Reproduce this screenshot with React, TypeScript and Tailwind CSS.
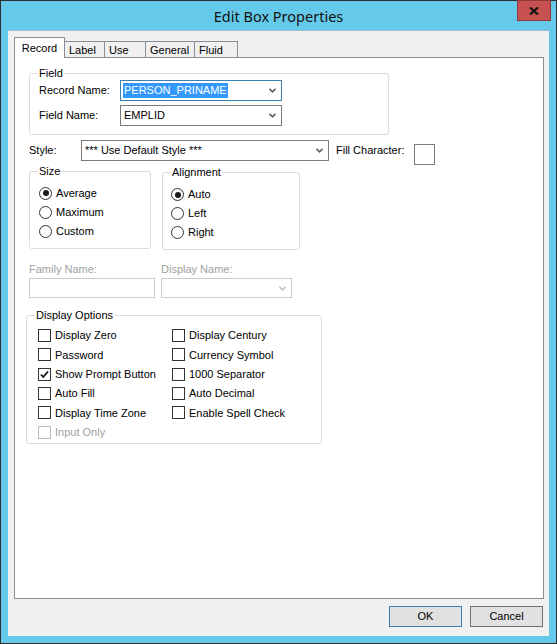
import React from 'react';

const font = { fontFamily: '"Liberation Sans", Arial, sans-serif' };

function Chevron({ disabled }: { disabled?: boolean }) {
  return (
    <svg width="7" height="5" viewBox="0 0 7 5" className="shrink-0">
      <path d="M0.5 0.8 L3.5 3.8 L6.5 0.8" fill="none" stroke={disabled ? '#c4c4c4' : '#606060'} strokeWidth="1.6" />
    </svg>
  );
}

function Select({ value, width, focused, disabled }: { value?: string; width: string; focused?: boolean; disabled?: boolean }) {
  const border = focused ? 'border-[#3c7fb1]' : disabled ? 'border-[#cccccc]' : 'border-[#7a7a7a]';
  return (
    <div className={`${width} h-[21px] border ${border} bg-white flex items-center pl-[2px] pr-[5px]`}>
      <div className="flex-1 min-w-0 flex">
        {value &&
          (focused ? (
            <span className="bg-[#3399ff] text-white px-px leading-[15px]">{value}</span>
          ) : (
            <span className="px-px leading-[15px]">{value}</span>
          ))}
      </div>
      <Chevron disabled={disabled} />
    </div>
  );
}

function Group({ title, className, children }: { title: string; className: string; children: React.ReactNode }) {
  return (
    <div className={`relative border border-[#dcdcdc] rounded-[3px] ${className}`}>
      <span className="absolute -top-[8px] left-[8px] bg-white px-px leading-[14px]">{title}</span>
      {children}
    </div>
  );
}

function Radio({ label, checked }: { label: string; checked?: boolean }) {
  return (
    <div className="flex items-center gap-[4px]">
      <span className="w-[13px] h-[13px] rounded-full border border-[#333333] bg-white flex items-center justify-center">
        {checked && <span className="w-[6px] h-[6px] rounded-full bg-[#1a1a1a]" />}
      </span>
      <span>{label}</span>
    </div>
  );
}

function Check({ label, checked, disabled }: { label: string; checked?: boolean; disabled?: boolean }) {
  return (
    <div className={`h-[19.3px] flex items-center gap-[4px] ${disabled ? 'text-[#a0a0a0]' : ''}`}>
      <span className={`w-[13px] h-[13px] border ${disabled ? 'border-[#bcbcbc]' : 'border-[#333333]'} bg-white flex items-center justify-center`}>
        {checked && (
          <svg width="9" height="9" viewBox="0 0 9 9">
            <path d="M1 4.5 L3.3 7 L8 1.5" fill="none" stroke="#111" strokeWidth="1.8" />
          </svg>
        )}
      </span>
      <span>{label}</span>
    </div>
  );
}

export default function App() {
  const tabs = ['Label', 'Use', 'General', 'Fluid'];
  const tabWidths = ['w-[40px]', 'w-[41px]', 'w-[49px]', 'w-[43px]'];

  return (
    <div className="w-[557px] h-[644px] border border-[#2f2f2f] bg-[#65caea] flex flex-col text-[11px] text-black" style={font}>
      {/* Title bar */}
      <div className="relative h-[29px] flex items-center justify-center">
        <span className="text-[14.5px] text-[#111] mt-[2px]" style={{ fontFamily: '"Noto Sans", sans-serif' }}>
          Edit Box Properties
        </span>
        <div className="absolute right-[5px] -top-px w-[34px] h-[21px] bg-[#c75050] border border-[#8c3b3b] flex items-center justify-center">
          <svg width="10" height="8" viewBox="0 0 10 8">
            <path d="M1 0.5 L9 7.5 M9 0.5 L1 7.5" stroke="#111" strokeWidth="2.2" />
          </svg>
        </div>
      </div>

      {/* Client area */}
      <div className="mx-[7px] h-[606px] bg-[#f0f0f0] border-t border-[#9fbccb] pl-[6px] pr-[5px] pt-[6px] flex flex-col">
        {/* Tabs */}
        <div className="flex items-end h-[20px] relative z-10">
          <div className="w-[51px] h-[21px] -mb-px bg-white border border-b-0 border-[#898c95] flex items-center justify-center">
            Record
          </div>
          {tabs.map((t, i) => (
            <div
              key={t}
              className={`${tabWidths[i]} h-[16px] bg-[#f0f0f0] border border-b-0 border-l-0 border-[#898c95] flex items-center pl-[4px] pt-px`}
            >
              {t}
            </div>
          ))}
        </div>

        {/* Panel */}
        <div className="w-[530px] h-[542px] border border-[#898c95] bg-white pl-[14px] pt-[15px]">
          <Group title="Field" className="w-[360px] h-[62px] pt-[6px] pl-[9px]">
            <div className="flex flex-col gap-[4px]">
              <div className="flex items-center h-[21px]">
                <span className="w-[81px]">Record Name:</span>
                <Select value="PERSON_PRINAME" width="w-[162px]" focused />
              </div>
              <div className="flex items-center h-[21px]">
                <span className="w-[81px]">Field Name:</span>
                <Select value="EMPLID" width="w-[162px]" />
              </div>
            </div>
          </Group>

          {/* Style */}
          <div className="mt-[5px] flex items-center h-[21px]">
            <span className="w-[52px]">Style:</span>
            <Select value="*** Use Default Style ***" width="w-[248px]" />
            <span className="ml-[7px] w-[78px]">Fill Character:</span>
            <div className="w-[21px] h-[21px] border border-[#7a7a7a] translate-y-[4px]" />
          </div>

          {/* Size / Alignment */}
          <div className="mt-[10px] flex items-start">
            <Group title="Size" className="w-[122px] h-[78px] pl-[9px] pt-[11px]">
              <div className="flex flex-col">
                <div className="h-[20px] flex items-center"><Radio label="Average" checked /></div>
                <div className="h-[19px] flex items-center"><Radio label="Maximum" /></div>
                <div className="h-[19px] flex items-center"><Radio label="Custom" /></div>
              </div>
            </Group>
            <Group title="Alignment" className="ml-[11px] mt-px w-[138px] h-[78px] pl-[8px] pt-[12px]">
              <div className="flex flex-col">
                <div className="h-[19px] flex items-center"><Radio label="Auto" checked /></div>
                <div className="h-[19px] flex items-center"><Radio label="Left" /></div>
                <div className="h-[19px] flex items-center"><Radio label="Right" /></div>
              </div>
            </Group>
          </div>

          {/* Family / Display name */}
          <div className="mt-[13px] flex text-[#a0a0a0]">
            <div className="w-[132px] flex flex-col">
              <span className="leading-[13px]">Family Name:</span>
              <div className="mt-[2px] w-[126px] h-[20px] border border-[#cccccc] bg-white" />
            </div>
            <div className="flex flex-col">
              <span className="leading-[13px]">Display Name:</span>
              <div className="mt-[2px]">
                <div className="w-[131px] h-[20px] border border-[#cccccc] bg-white flex items-center justify-end pr-[5px]">
                  <Chevron disabled />
                </div>
              </div>
            </div>
          </div>

          {/* Display Options */}
          <Group title="Display Options" className="-ml-[3px] mt-[17px] w-[296px] h-[129px] pl-[11px] pt-[10px]">
            <div className="flex">
              <div className="w-[134px] flex flex-col">
                <Check label="Display Zero" />
                <Check label="Password" />
                <Check label="Show Prompt Button" checked />
                <Check label="Auto Fill" />
                <Check label="Display Time Zone" />
                <Check label="Input Only" disabled />
              </div>
              <div className="flex flex-col">
                <Check label="Display Century" />
                <Check label="Currency Symbol" />
                <Check label="1000 Separator" />
                <Check label="Auto Decimal" />
                <Check label="Enable Spell Check" />
              </div>
            </div>
          </Group>
        </div>

        {/* Buttons */}
        <div className="mt-[7px] flex justify-end gap-[8px] pr-px">
          <button className="w-[73px] h-[21px] border border-[#3c7fb1] bg-[#e1e1e1] text-[11px]" style={font}>
            OK
          </button>
          <button className="w-[73px] h-[21px] border border-[#707070] bg-[#e1e1e1] text-[11px]" style={font}>
            Cancel
          </button>
        </div>
      </div>
    </div>
  );
}
